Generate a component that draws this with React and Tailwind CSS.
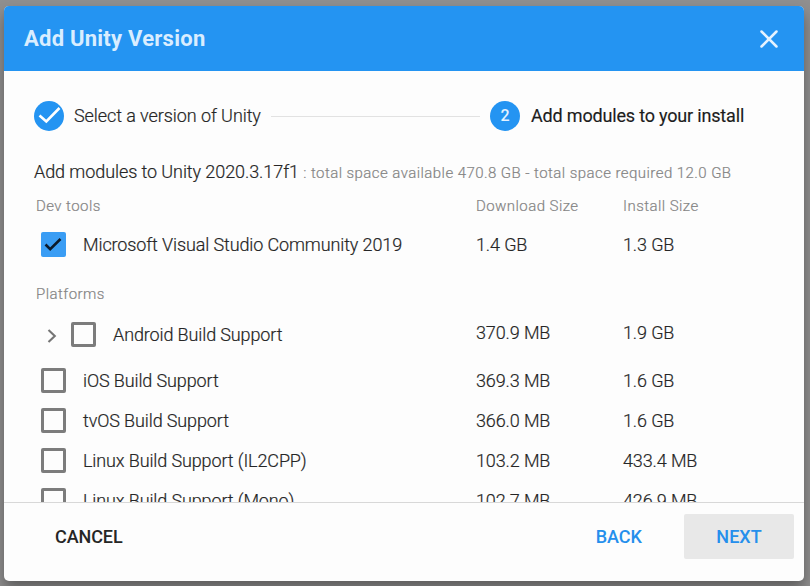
const Box = ({ checked }) => (
  <span className={`flex size-[25px] shrink-0 items-center justify-center rounded-[2px] ${checked ? "bg-[#3a9df4]" : "border-[3px] border-[#7c7c7c]"}`}>
    {checked && (
      <svg width="25" height="25" viewBox="0 0 25 25" fill="none" stroke="#0b1a2c" strokeWidth="2.6"><path d="M4.5 12.5l4.7 4.7L19.5 7" /></svg>
    )}
  </span>
);

const Row = ({ name, download, install, height, checked, expandable }) => (
  <div className={`flex shrink-0 items-center pl-[37px] ${height}`}>
    <div className="flex w-[435px] items-center">
      {expandable && (
        <svg className="mt-[4px] mr-[14px] ml-[6px] shrink-0" width="10" height="16" viewBox="0 0 10 16" fill="none" stroke="#757575" strokeWidth="2.1"><path d="M1.5 2l6.3 6-6.3 6" /></svg>
      )}
      <Box checked={checked} />
      <span className="ml-[17px]">{name}</span>
    </div>
    <span className={`w-[147px] ${expandable ? "pb-[3px]" : ""}`}>{download}</span>
    <span className={expandable ? "pb-[3px]" : ""}>{install}</span>
  </div>
);

export default function App() {
  return (
    <div className="h-[586px] w-[810px] overflow-hidden bg-[#908f8f] pt-[6px] pl-1 font-['Roboto',sans-serif] text-[18px] font-light tracking-[-0.12px] text-[#262626]">
      <div className="flex h-[575px] w-[800px] flex-col overflow-hidden rounded-[5px] bg-[#fdfdfd] shadow-[0_8px_14px_rgba(0,0,0,0.35)]">
        <header className="flex h-[65px] shrink-0 items-center justify-between bg-[#2494f2] px-5 text-white">
          <h1 className="text-[22px] font-bold tracking-[0.24px] text-[#d9edff]">Add Unity Version</h1>
          <svg className="mr-[6px]" width="18" height="18" viewBox="0 0 18 18" stroke="#e4f2ff" strokeWidth="2.5" strokeLinecap="round"><path d="M1.5 1.5l15 15M16.5 1.5L1.5 16.5" /></svg>
        </header>
        <div className="flex h-[90px] shrink-0 items-center px-[30px]">
          <svg width="30" height="30" viewBox="0 0 30 30"><circle cx="15" cy="15" r="15" fill="#2494f2" /><path d="M5.5 14.5l6.8 6L25.5 7" fill="none" stroke="#fff" strokeWidth="2.6" /></svg>
          <span className="ml-[10px] w-[187px] pb-[2px] tracking-[-0.08px] whitespace-nowrap [-webkit-text-stroke:0.2px]">Select a version of Unity</span>
          <span className="mx-[10px] h-px w-[209px] bg-[#e2e2e2]" />
          <span className="flex size-[30px] items-center justify-center rounded-full bg-[#2494f2] text-[16px] font-medium text-[#e4f2ff]">2</span>
          <span className="ml-[11px] pb-[2px] font-normal tracking-[-0.18px] text-[#1c1c1c] [-webkit-text-stroke:0.15px]">Add modules to your install</span>
        </div>
        <main className="flex h-[341px] shrink-0 flex-col overflow-hidden [-webkit-text-stroke:0.2px]">
          <div className="h-[32px] shrink-0 pl-[30px] leading-[22px] tracking-[-0.08px] whitespace-nowrap">
            Add modules to Unity 2020.3.17f1 <span className="text-[15px] tracking-[0.44px] text-[#858585]">: total space available 470.8 GB - total space required 12.0 GB</span>
          </div>
          <div className="flex h-[27px] shrink-0 pl-8 text-[15px] leading-[26px] tracking-[0.44px] text-[#858585]">
            <span className="w-[440px]">Dev tools</span><span className="w-[147px]">Download Size</span><span>Install Size</span>
          </div>
          <Row name="Microsoft Visual Studio Community 2019" download="1.4 GB" install="1.3 GB" checked height="h-[48px]" />
          <div className="h-[40px] shrink-0 pl-8 pt-[13px] text-[15px] leading-[26px] tracking-[0.44px] text-[#858585]">Platforms</div>
          <Row name="Android Build Support" download="370.9 MB" install="1.9 GB" height="h-[52px]" expandable />
          <Row name="iOS Build Support" download="369.3 MB" install="1.6 GB" height="h-[40px]" />
          <Row name="tvOS Build Support" download="366.0 MB" install="1.6 GB" height="h-[40px]" />
          <Row name="Linux Build Support (IL2CPP)" download="103.2 MB" install="433.4 MB" height="h-[40px]" />
          <Row name="Linux Build Support (Mono)" download="102.7 MB" install="426.9 MB" height="h-[40px]" />
        </main>
        <footer className="flex flex-1 items-center border-t border-[#d8d8d8] pr-[10px] pb-[11px] pl-[51px] font-medium">
          <button className="tracking-[-0.1px]">CANCEL</button>
          <button className="ml-auto tracking-normal text-[#258fec]">BACK</button>
          <button className="ml-[42px] h-[45px] w-[110px] rounded-[2px] bg-[#e8e8e8] tracking-normal text-[#258fec]">NEXT</button>
        </footer>
      </div>
    </div>
  );
}
